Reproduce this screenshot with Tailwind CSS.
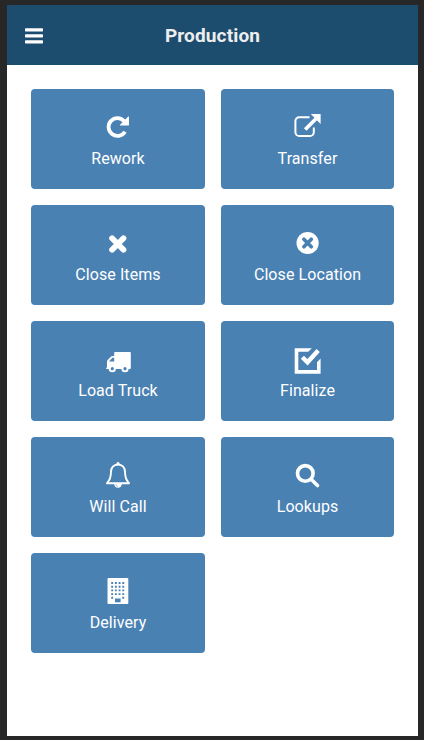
<!DOCTYPE html>
<html lang="en">
<head>
<meta charset="utf-8">
<title>Production</title>
<script src="https://cdn.jsdelivr.net/npm/@tailwindcss/browser@4"></script>
</head>
<body class="bg-[#272727] font-[Roboto,sans-serif]">
<div class="w-[424px] h-[740px] pl-[7px] pr-[6px] pt-[5px] pb-1 overflow-hidden">
<div class="h-full bg-white">
<header class="h-[60px] pt-0.5 bg-[#1d4d6e] grid grid-cols-[60px_1fr_60px] items-center">
<button class="pl-[18px]" aria-label="Menu"><svg width="18" height="18" viewBox="0 0 18 18" fill="#fff"><rect y="1.3" width="18" height="3.2" rx=".7"/><rect y="7.3" width="18" height="3.2" rx=".7"/><rect y="13.3" width="18" height="3.2" rx=".7"/></svg></button>
<h1 class="text-center text-[#eeeeee] text-[19px] leading-6 font-bold tracking-[0.15px]">Production</h1>
</header>
<main class="grid grid-cols-[174px_173px] gap-4 p-6 text-white text-base tracking-[0.08px]">
<a class="h-[100px] rounded bg-[#4a81b3] pt-[22px] flex flex-col items-center"><svg class="shrink-0" width="32" height="32" viewBox="0 0 32 32"><path d="M23 20.8A8.9 8.9 0 1 1 22.2 10.2" fill="none" stroke="#fff" stroke-width="3.8"/><path d="M26.2 5.6q.8-.4.8.5v7.6q0 .9-.9.9h-7.6q-1 0-.4-.9z" fill="#fff"/></svg><span class="leading-6 mt-1">Rework</span></a>
<a class="h-[100px] rounded bg-[#4a81b3] pt-[22px] flex flex-col items-center"><svg class="shrink-0" width="32" height="32" viewBox="0 0 32 32" fill="none" stroke="#fff"><path d="M17.5 6.3H7.2A3.8 3.8 0 0 0 3.4 10.1V21.2A3.8 3.8 0 0 0 7.2 25H18A3.8 3.8 0 0 0 21.8 21.2V16.5" stroke-width="2"/><path d="M13.2 18.6 24.5 7.3" stroke-width="3.6"/><path d="M18.8 3.1H28.6v9.8z" fill="#fff" stroke="none"/></svg><span class="leading-6 mt-1">Transfer</span></a>
<a class="h-[100px] rounded bg-[#4a81b3] pt-[22px] flex flex-col items-center"><svg class="shrink-0" width="32" height="32" viewBox="0 0 32 32" stroke="#fff" stroke-width="5.8" stroke-linecap="round" fill="none"><path d="m10.1 11.3 11.4 11.4M21.5 11.3 10.1 22.7"/></svg><span class="leading-6 mt-1">Close Items</span></a>
<a class="h-[100px] rounded bg-[#4a81b3] pt-[22px] flex flex-col items-center"><svg class="shrink-0" width="32" height="32" viewBox="0 0 32 32"><circle cx="15.6" cy="16" r="11.1" fill="#fff"/><path d="m11.9 12.3 7.4 7.4m0-7.4-7.4 7.4" stroke="#4a81b3" stroke-width="3.7" stroke-linecap="round"/></svg><span class="leading-6 mt-1">Close Location</span></a>
<a class="h-[100px] rounded bg-[#4a81b3] pt-[22px] flex flex-col items-center"><svg class="shrink-0" width="32" height="32" viewBox="0 0 32 32"><path d="M13 9h15q.8 0 .8.8V25q0 1-1 1H5q-1 0-1-.8t1-.8V18.5q0-.8.6-1.4l3.5-3.6q.6-.6 1.4-.6h1.7V9.8q0-.8.8-.8Z" fill="#fff"/><path d="M12.2 14.8H10.4L7 18.4h5.2z" fill="#4a81b3"/><circle cx="10.3" cy="25.7" r="3.6" fill="#fff"/><circle cx="23" cy="25.7" r="3.6" fill="#fff"/><circle cx="10.3" cy="25.7" r="1.6" fill="#4a81b3"/><circle cx="23" cy="25.7" r="1.6" fill="#4a81b3"/></svg><span class="leading-6 mt-1">Load Truck</span></a>
<a class="h-[100px] rounded bg-[#4a81b3] pt-[22px] flex flex-col items-center"><svg class="shrink-0" width="32" height="32" viewBox="0 0 32 32" fill="none" stroke="#fff"><path d="M19.8 5.2 16.2 8.8H6.3V27H25V19.2L28.6 15.6V30.8H2.7V5.2Z" fill="#fff" stroke="none"/><path d="m10.4 14.2 5.1 5.1L26.2 7.6" stroke-width="4.4"/></svg><span class="leading-6 mt-1">Finalize</span></a>
<a class="h-[100px] rounded bg-[#4a81b3] pt-[22px] flex flex-col items-center"><svg class="shrink-0" width="32" height="32" viewBox="0 0 32 32" fill="none" stroke="#fff" stroke-width="1.9" stroke-linejoin="round"><path d="M16 5.5c-4.5 0-7 3.5-7 7.3 0 5.5-1.3 8.6-4 11.4h22c-2.7-2.8-4-5.9-4-11.4 0-3.8-2.5-7.3-7-7.3Z"/><circle cx="16" cy="4.7" r="1.6" fill="#fff" stroke="none"/><path d="M12.3 25a3.7 3.7 0 0 0 7.4 0z" fill="#fff" stroke="none"/><path d="M13.8 25.6q.3 1.5 2 1.7" stroke="#4a81b3" stroke-width=".6"/></svg><span class="leading-6 mt-1">Will Call</span></a>
<a class="h-[100px] rounded bg-[#4a81b3] pt-[22px] flex flex-col items-center"><svg class="shrink-0" width="32" height="32" viewBox="0 0 32 32" fill="none" stroke="#fff" stroke-width="3.6" stroke-linecap="round"><circle cx="13.3" cy="14.4" r="7.8"/><path d="m19.4 20.4 6.1 6.1"/></svg><span class="leading-6 mt-1">Lookups</span></a>
<a class="h-[100px] rounded bg-[#4a81b3] pt-[22px] flex flex-col items-center"><svg class="shrink-0" width="32" height="32" viewBox="0 0 32 32"><rect x="5.5" y="3" width="20.8" height="26" rx="1" fill="#fff"/><path d="M9.2 8H23M9.2 11.7H23M9.2 15.4H23M9.2 19.1H23" stroke="#4a81b3" stroke-width="1.9" stroke-dasharray="1.9 1.8"/><path d="M9.2 22.8h1.9m9.2 0h1.9" stroke="#4a81b3" stroke-width="1.9"/><path d="M13 23.5h5.6v3.8H13z" fill="#4a81b3"/></svg><span class="leading-6 mt-1">Delivery</span></a>
</main>
</div>
</div>
</body>
</html>
